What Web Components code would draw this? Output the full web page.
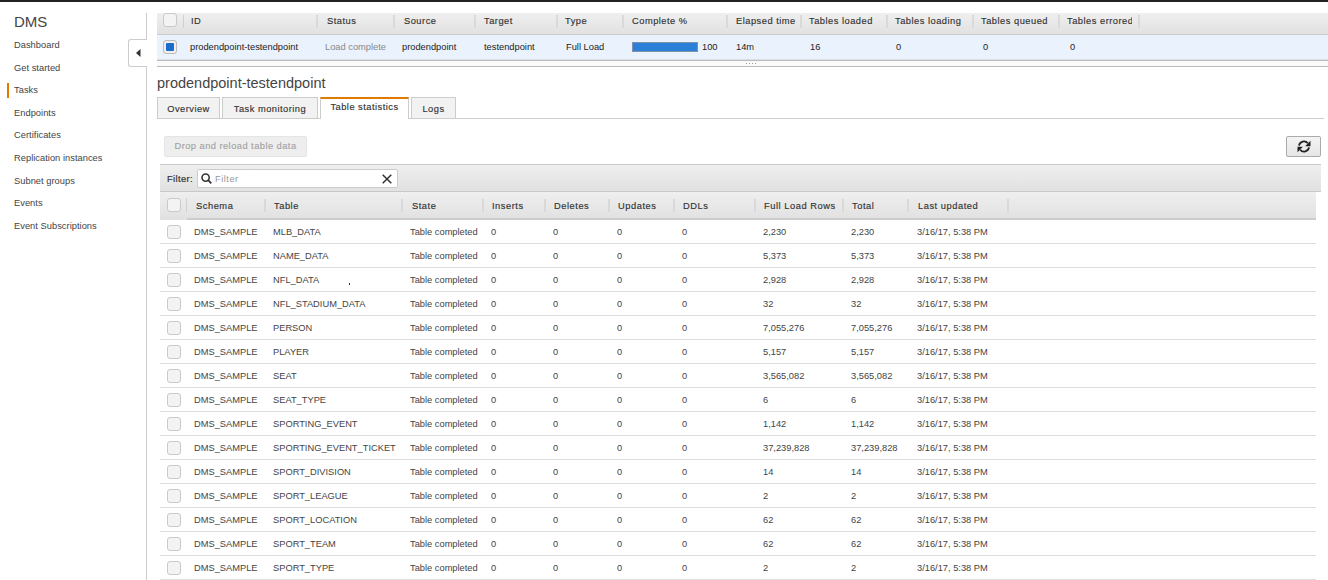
<!DOCTYPE html>
<html>
<head>
<meta charset="utf-8">
<title>DMS</title>
<style>
  html, body { margin: 0; padding: 0; height: 580px; overflow: hidden; background: #fff; }
  body { font-family: "Liberation Sans", Arial, sans-serif; font-size: 9.3px; color: #444; border-top: 2px solid #222; box-sizing: border-box; }
</style>
</head>
<body>
<dms-console></dms-console>

<script>
// label, width, header padding, cell padding
const TASK_COLS = [
  ['ID', 134, 7, 6], ['Status', 77, 9, 7], ['Source', 81, 9, 7], ['Target', 82, 8, 8], ['Type', 66, 7, 8],
  ['Complete %', 104, 8, 8], ['Elapsed time', 74, 8, 8], ['Tables loaded', 86, 7, 8], ['Tables loading', 86, 7, 8],
  ['Tables queued', 86, 7, 9], ['Tables errored', 80, 7, 10]
];

const STAT_COLS = [
  ['Schema', 79, 9, 7], ['Table', 137, 8, 7], ['State', 81, 9, 7], ['Inserts', 62, 8, 7], ['Deletes', 64, 8, 7],
  ['Updates', 65, 8, 7], ['DDLs', 81, 8, 7], ['Full Load Rows', 88, 8, 7], ['Total', 65, 8, 7], ['Last updated', 100, 9, 8]
];

const STAT_ROWS = [
  ['MLB_DATA', '2,230'], ['NAME_DATA', '5,373'], ['NFL_DATA', '2,928'], ['NFL_STADIUM_DATA', '32'],
  ['PERSON', '7,055,276'], ['PLAYER', '5,157'], ['SEAT', '3,565,082'], ['SEAT_TYPE', '6'],
  ['SPORTING_EVENT', '1,142'], ['SPORTING_EVENT_TICKET', '37,239,828'], ['SPORT_DIVISION', '14'],
  ['SPORT_LEAGUE', '2'], ['SPORT_LOCATION', '62'], ['SPORT_TEAM', '62'], ['SPORT_TYPE', '2']
];

const NAV = ['Dashboard', 'Get started', 'Tasks', 'Endpoints', 'Certificates',
  'Replication instances', 'Subnet groups', 'Events', 'Event Subscriptions'];

class DmsCheck extends HTMLElement {
  constructor() {
    super();
    this.attachShadow({ mode: 'open' });
  }
  connectedCallback() {
    this.shadowRoot.innerHTML = `<style>
      :host { display: block; width: 14px; height: 14px; box-sizing: border-box; border: 1px solid #c9c9c9; border-radius: 3px; background: #f3f3f3; padding: 2px; }
      :host([on]) { background: #eee; border-color: #bbb; }
      i { display: none; width: 100%; height: 100%; border-radius: 1px; background: #1b6dcb; }
      :host([on]) i { display: block; }
    </style><i></i>`;
  }
}
customElements.define('dms-check', DmsCheck);

class DmsNav extends HTMLElement {
  constructor() {
    super();
    this.attachShadow({ mode: 'open' });
  }
  connectedCallback() {
    this.shadowRoot.innerHTML = `<style>
      :host { display: block; position: relative; width: 147px; height: 567px; margin-top: 11px; box-sizing: border-box; border-right: 1px solid #ccc; flex: none; }
      h1 { margin: 0; padding: 0 0 0 14px; height: 20px; font: 400 15px/18px "Liberation Sans", Arial, sans-serif; color: #444; }
      ul { list-style: none; margin: 2px 0 0; padding: 0; }
      li { height: 22.6px; line-height: 21.5px; padding-left: 14px; letter-spacing: .03px; color: #444; position: relative; }
      li.on::before { content: ""; position: absolute; left: 7px; top: 3px; width: 2px; height: 15px; background: #e07b00; }
      .toggle { position: absolute; left: 128px; top: 26px; width: 19px; height: 28px; box-sizing: border-box; background: #fff; border: 1px solid #ccc; border-right: 0; border-radius: 3px 0 0 3px; display: flex; align-items: center; justify-content: center; }
      .toggle svg { display: block; }
    </style>
    <h1>DMS</h1>
    <ul>${NAV.map(n => `<li class="${n === 'Tasks' ? 'on' : ''}">${n}</li>`).join('')}</ul>
    <div class="toggle"><svg width="5" height="8" viewBox="0 0 5 8"><path d="M4.5 0v8L0 4z" fill="#333"/></svg></div>`;
  }
}
customElements.define('dms-nav', DmsNav);

class DmsTaskTable extends HTMLElement {
  constructor() {
    super();
    this.attachShadow({ mode: 'open' });
  }
  connectedCallback() {
    const cells = ['prodendpoint-testendpoint', 'Load complete', 'prodendpoint', 'testendpoint', 'Full Load',
      '', '14m', '16', '0', '0', '0'];
    const head = c => c[0] === 'Tables errored'
      ? `<span style="display:block;width:65px;overflow:hidden">${c[0]}</span>` : c[0];
    this.shadowRoot.innerHTML = `<style>
      :host { display: block; margin-top: 11px; }
      .head { display: flex; align-items: flex-start; height: 22px; box-sizing: border-box; background: linear-gradient(#efefef, #e1e1e1); border-bottom: 1px solid #ccc; overflow: hidden; }
      .tick { width: 27px; flex: none; padding: 0 0 0 6px; box-sizing: border-box; }
      .head .tick { position: relative; height: 15px; }
      .head .tick::after { content: ""; position: absolute; right: 0; top: 2px; height: 13px; width: 1px; background: #d0d0d0; }
      .th { flex: none; box-sizing: border-box; height: 13px; margin-top: 2px; border-right: 2px solid #d9d9d9; line-height: 12px; letter-spacing: .5px; color: #333; white-space: nowrap; overflow: hidden; -webkit-text-stroke: .15px #333; }
      .row { display: flex; align-items: center; height: 25px; box-sizing: border-box; background: #eaf2fd; border-bottom: 1px solid #d8dfe8; }
      .td { flex: none; box-sizing: border-box; color: #222; white-space: nowrap; overflow: hidden; }
      .td.st { color: #888; }
      .bar { display: flex; align-items: center; gap: 4px; }
      .bar b { display: block; width: 66px; height: 10px; box-sizing: border-box; background: #2b7fd8; border: 1px solid #7c93a8; }
      .split { position: relative; height: 7px; box-sizing: border-box; border-top: 1px solid #bbb; border-bottom: 1px solid #bbb; background: #fafafa; }
      .grip { position: absolute; left: 589px; top: 2px; width: 11px; height: 1px; background: repeating-linear-gradient(90deg, #999 0 1px, transparent 1px 3px); }
    </style>
    <div class="head"><div class="tick"><dms-check></dms-check></div>${TASK_COLS.map(c => `<div class="th" style="width:${c[1]}px;padding-left:${c[2]}px">${head(c)}</div>`).join('')}</div>
    <div class="row"><div class="tick"><dms-check on></dms-check></div>${TASK_COLS.map((c, i) => {
      const inner = i === 5 ? '<div class="bar"><b></b><span>100</span></div>' : cells[i];
      return `<div class="td ${i === 1 ? 'st' : ''}" style="width:${c[1]}px;padding-left:${c[3]}px">${inner}</div>`;
    }).join('')}</div>
    <div class="split"><div class="grip"></div></div>`;
  }
}
customElements.define('dms-task-table', DmsTaskTable);

class DmsTabs extends HTMLElement {
  constructor() {
    super();
    this.attachShadow({ mode: 'open' });
  }
  connectedCallback() {
    const tabs = [['Overview', 63], ['Task monitoring', 96], ['Table statistics', 89], ['Logs', 45]];
    this.shadowRoot.innerHTML = `<style>
      :host { display: flex; gap: 2px; height: 22px; box-sizing: border-box; margin-right: 4px; border-bottom: 1px solid #ccc; }
      div { box-sizing: border-box; height: 21px; padding-top: 4px; text-align: center; background: #f2f2f2; border: 1px solid #ccc; border-bottom: 0; letter-spacing: .48px; line-height: 14px; color: #333; -webkit-text-stroke: .15px #333; }
      div.on { height: 22px; padding-top: 1px; background: #fff; border-top: 2px solid #e07b00; }
    </style>${tabs.map(t => `<div class="${t[0] === 'Table statistics' ? 'on' : ''}" style="width:${t[1]}px">${t[0]}</div>`).join('')}`;
  }
}
customElements.define('dms-tabs', DmsTabs);

class DmsToolbar extends HTMLElement {
  constructor() {
    super();
    this.attachShadow({ mode: 'open' });
  }
  connectedCallback() {
    this.shadowRoot.innerHTML = `<style>
      :host { display: flex; justify-content: space-between; margin: 17px 7px 0 7px; height: 21px; }
      .drop { width: 143px; box-sizing: border-box; background: #eee; border: 1px solid #e4e4e4; border-radius: 2px; color: #a3a3a3; line-height: 19px; text-align: center; letter-spacing: .46px; -webkit-text-stroke: .15px #a3a3a3; }
      .refresh { width: 35px; box-sizing: border-box; background: linear-gradient(#f4f4f4, #e6e6e6); border: 1px solid #aaa; border-radius: 2px; display: flex; align-items: center; justify-content: center; }
      svg { display: block; }
    </style>
    <div class="drop">Drop and reload table data</div>
    <div class="refresh"><svg width="14" height="13" viewBox="0 0 14 13" fill="none">
      <path d="M2 5.6A5 5 0 0 1 10.8 3.2" stroke="#222" stroke-width="1.8"/>
      <path d="M13.5 .8v5.4H8.1z" fill="#222"/>
      <path d="M12 7.4A5 5 0 0 1 3.2 9.8" stroke="#222" stroke-width="1.8"/>
      <path d="M.5 12.2V6.8h5.4z" fill="#222"/>
    </svg></div>`;
  }
}
customElements.define('dms-toolbar', DmsToolbar);

class DmsFilter extends HTMLElement {
  constructor() {
    super();
    this.attachShadow({ mode: 'open' });
  }
  connectedCallback() {
    this.shadowRoot.innerHTML = `<style>
      :host { display: flex; align-items: center; gap: 3px; height: 28px; box-sizing: border-box; margin: 7px 7px 0 3px; padding: 1px 0 0 7px; background: linear-gradient(#efefef, #e1e1e1); border-top: 1px solid #c8c8c8; border-bottom: 1px solid #c8c8c8; }
      label { width: 27px; letter-spacing: .4px; color: #333; -webkit-text-stroke: .2px #333; }
      .box { display: flex; align-items: center; width: 201px; height: 19px; box-sizing: border-box; background: #fff; border: 1px solid #ccc; border-radius: 2px; padding: 0 5px 0 3px; }
      .box span { flex: 1; margin-left: 3px; color: #999; letter-spacing: .5px; }
      svg { display: block; flex: none; }
    </style>
    <label>Filter:</label>
    <div class="box">
      <svg width="11" height="11" viewBox="0 0 11 11" fill="none"><circle cx="4.6" cy="4.6" r="3.6" stroke="#333" stroke-width="1.6"/><path d="M7.2 7.2L10.3 10.3" stroke="#333" stroke-width="1.8"/></svg>
      <span>Filter</span>
      <svg width="10" height="10" viewBox="0 0 10 10" fill="none"><path d="M.7.7l8.6 8.6M9.3.7L.7 9.3" stroke="#333" stroke-width="1.5"/></svg>
    </div>`;
  }
}
customElements.define('dms-filter', DmsFilter);

class DmsStatsTable extends HTMLElement {
  constructor() {
    super();
    this.attachShadow({ mode: 'open' });
  }
  connectedCallback() {
    const row = r => {
      const vals = ['DMS_SAMPLE', r[0], 'Table completed', '0', '0', '0', '0', r[1], r[1], '3/16/17, 5:38 PM'];
      return `<div class="row"><div class="tick"><dms-check></dms-check></div>${STAT_COLS.map((c, i) =>
        `<div class="td" style="width:${c[1]}px;padding-left:${c[3]}px">${vals[i]}</div>`).join('')}</div>`;
    };
    this.shadowRoot.innerHTML = `<style>
      :host { display: block; position: relative; margin: 0 12px 0 3px; }
      .head { display: flex; align-items: flex-start; height: 28px; box-sizing: border-box; background: linear-gradient(#efefef, #e1e1e1); position: relative; }
      .head::after { content: ""; position: absolute; left: 27px; right: 0; bottom: 0; height: 2px; background: #ccc; }
      .tick { width: 27px; flex: none; padding-left: 7px; box-sizing: border-box; }
      .head .tick { height: 14px; margin-top: 6px; border-right: 1px solid #d0d0d0; }
      .th { flex: none; box-sizing: border-box; height: 13px; margin-top: 7px; border-right: 2px solid #d9d9d9; letter-spacing: .54px; line-height: 14px; color: #333; white-space: nowrap; -webkit-text-stroke: .15px #333; }
      .row { display: flex; align-items: center; height: 24px; box-sizing: border-box; border-bottom: 1px solid #ddd; }
      .td { flex: none; box-sizing: border-box; color: #444; white-space: nowrap; }
      .mote { position: absolute; left: 189px; top: 91px; width: 1px; height: 2px; background: #333; }
    </style>
    <div class="head"><div class="tick"><dms-check></dms-check></div>${STAT_COLS.map(c => `<div class="th" style="width:${c[1]}px;padding-left:${c[2]}px">${c[0]}</div>`).join('')}</div>
    ${STAT_ROWS.map(row).join('')}
    <div class="mote"></div>`;
  }
}
customElements.define('dms-stats-table', DmsStatsTable);

class DmsConsole extends HTMLElement {
  constructor() {
    super();
    this.attachShadow({ mode: 'open' });
  }
  connectedCallback() {
    this.shadowRoot.innerHTML = `<style>
      :host { display: flex; height: 578px; overflow: hidden; }
      main { flex: 1; min-width: 0; margin-left: 10px; }
      h2 { margin: 0; height: 30px; padding-top: 6px; box-sizing: border-box; font: 400 14.5px/20px "Liberation Sans", Arial, sans-serif; color: #444; }
    </style>
    <dms-nav></dms-nav>
    <main>
      <dms-task-table></dms-task-table>
      <h2>prodendpoint-testendpoint</h2>
      <dms-tabs></dms-tabs>
      <dms-toolbar></dms-toolbar>
      <dms-filter></dms-filter>
      <dms-stats-table></dms-stats-table>
    </main>`;
  }
}
customElements.define('dms-console', DmsConsole);
</script>
</body>
</html>
